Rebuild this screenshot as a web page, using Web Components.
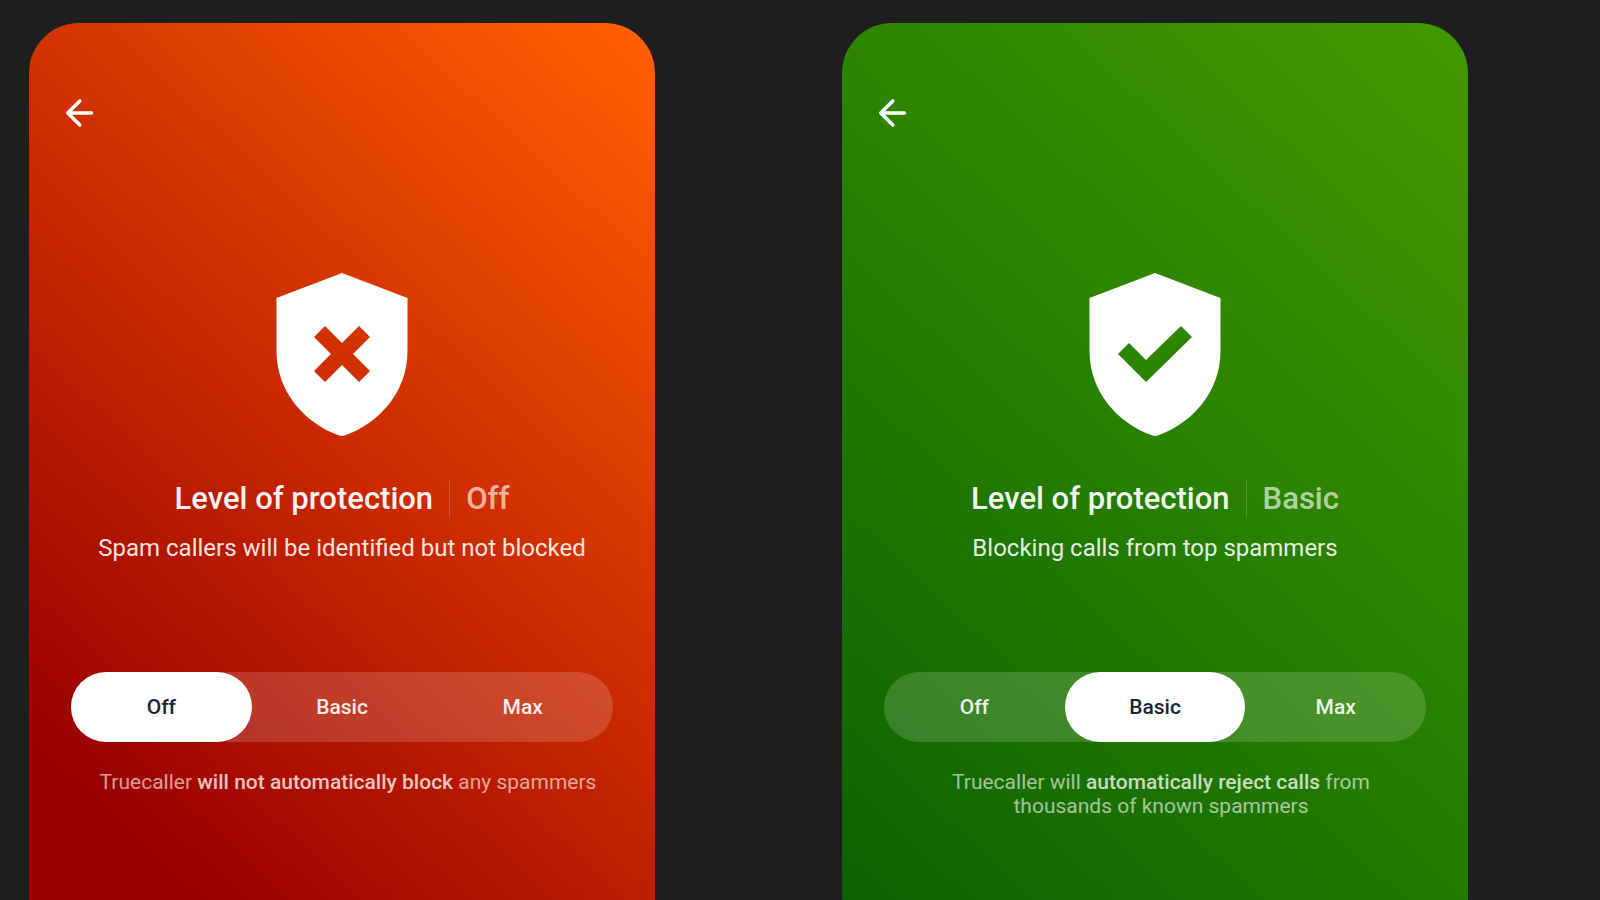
<!DOCTYPE html>
<html lang="en">
<head>
<meta charset="utf-8">
<meta name="viewport" content="width=device-width, initial-scale=1">
<title>Level of protection</title>
<style>
  body { margin: 0; background: #1e1e1e; font-family: Roboto, "Noto Sans", sans-serif; }
  protection-card b { font-weight: 500; color: rgba(255, 255, 255, .75); }
</style>
</head>
<body>
<protection-gallery>
  <protection-card tone="danger" level="Off">
    <span slot="summary">Spam callers will be identified but not blocked</span>
    <span slot="note">Truecaller <b>will not automatically block</b> any spammers</span>
  </protection-card>
  <protection-card tone="safe" level="Basic">
    <span slot="summary">Blocking calls from top spammers</span>
    <span slot="note">Truecaller will <b>automatically reject calls</b> from<br>thousands of known spammers</span>
  </protection-card>
</protection-gallery>

<script>
class ProtectionGallery extends HTMLElement {
  constructor() {
    super();
    this.attachShadow({ mode: 'open' }).innerHTML = `
      <style>
        :host { display: block; }
        main {
          box-sizing: border-box;
          min-height: 100vh;
          display: grid;
          grid-template-columns: 1fr 1fr;
          column-gap: 187px;
          padding: 23px 132px 0 29px;
        }
      </style>
      <main><slot></slot></main>`;
  }
}

class BackButton extends HTMLElement {
  constructor() {
    super();
    this.attachShadow({ mode: 'open' }).innerHTML = `
      <style>
        :host { display: block; }
        button { display: block; border: 0; padding: 0; background: none; color: #fff; cursor: pointer; }
        svg { display: block; }
      </style>
      <button type="button" aria-label="Back">
        <svg width="32" height="32" viewBox="0 0 32 32" fill="none" stroke="currentColor" stroke-width="3.6" stroke-linecap="round" stroke-linejoin="round">
          <path d="M28.5 16H5M16.800 4L4.800 16L16.800 28"/>
        </svg>
      </button>`;
  }
}

class ShieldIcon extends HTMLElement {
  connectedCallback() {
    const marks = {
      cross: 'M49 53L66 70L83 53L94 64L77 81L94 98L83 109L66 92L49 109L38 98L55 81L38 64Z',
      check: 'M40 70L57 87L92 53L103 64L57 109L29 81Z'
    };
    this.attachShadow({ mode: 'open' }).innerHTML = `
      <style>
        :host { display: block; }
        svg { display: block; }
      </style>
      <svg width="132" height="164" viewBox="0 0 132 164" aria-hidden="true">
        <path fill="#fff" fill-rule="evenodd" d="M66 0L131.500 25V78C131.500 119 103 150 70 162Q66 164 62 162C29 150 .5 119 .5 78V25Z${marks[this.getAttribute('mark')]}"/>
      </svg>`;
  }
}

class LevelSwitch extends HTMLElement {
  connectedCallback() {
    const value = this.getAttribute('value');
    this.attachShadow({ mode: 'open' }).innerHTML = `
      <style>
        :host { display: block; }
        fieldset {
          display: grid;
          grid-template-columns: repeat(3, 1fr);
          min-width: 0; margin: 0; padding: 0; border: 0;
          border-radius: 35px;
          background: rgba(255, 255, 255, .16);
        }
        label {
          position: relative;
          display: block;
          border-radius: 35px;
          text-align: center;
          font-size: 21px; line-height: 70px; font-weight: 500;
          color: rgba(255, 255, 255, .92);
          cursor: pointer;
        }
        input { position: absolute; inset: 0; width: 100%; height: 100%; margin: 0; opacity: 0; cursor: pointer; }
        label:has(input:checked) { background: #fff; color: #1c2433; }
      </style>
      <fieldset aria-label="Level of protection">
        ${['Off', 'Basic', 'Max'].map(l => `<label><input type="radio" name="level" value="${l}"${l === value ? ' checked' : ''}>${l}</label>`).join('')}
      </fieldset>`;
  }
}

class ProtectionCard extends HTMLElement {
  connectedCallback() {
    const level = this.getAttribute('level');
    this.attachShadow({ mode: 'open' }).innerHTML = `
      <style>
        :host {
          display: block;
          box-sizing: border-box;
          min-width: 0;
          padding: 74px 42px 48px;
          border-radius: 50px 50px 0 0;
          color: #fff;
        }
        :host([tone="danger"]) { background: linear-gradient(43deg, #990000 11%, #cc2c00 53%, #ff5f00 98%); }
        :host([tone="safe"]) { background: linear-gradient(43deg, #0d6100 0%, #288000 50%, #429a00 100%); }
        back-button { margin: 0 0 144px -8px; }
        shield-icon { width: 132px; margin: 0 auto 44px; }
        h1 {
          display: flex; justify-content: center; align-items: center; gap: 16px;
          margin: 0;
          font-size: 31px; line-height: 36px; font-weight: 500;
          color: rgba(255, 255, 255, .95);
        }
        .level { padding-left: 16px; border-left: 1px solid rgba(255, 255, 255, .2); color: rgba(255, 255, 255, .65); }
        .summary { margin: 15px 0 108px; text-align: center; font-size: 24px; line-height: 32px; color: rgba(255, 255, 255, .9); }
        .note { margin: 28px 0 0 12px; text-align: center; font-size: 21px; line-height: 24px; color: rgba(255, 255, 255, .62); }
      </style>
      <back-button></back-button>
      <shield-icon mark="${level === 'Off' ? 'cross' : 'check'}"></shield-icon>
      <h1><span>Level of protection</span><span class="level">${level}</span></h1>
      <p class="summary"><slot name="summary"></slot></p>
      <level-switch value="${level}"></level-switch>
      <p class="note"><slot name="note"></slot></p>`;
  }
}

customElements.define('back-button', BackButton);
customElements.define('shield-icon', ShieldIcon);
customElements.define('level-switch', LevelSwitch);
customElements.define('protection-card', ProtectionCard);
customElements.define('protection-gallery', ProtectionGallery);
</script>
</body>
</html>
